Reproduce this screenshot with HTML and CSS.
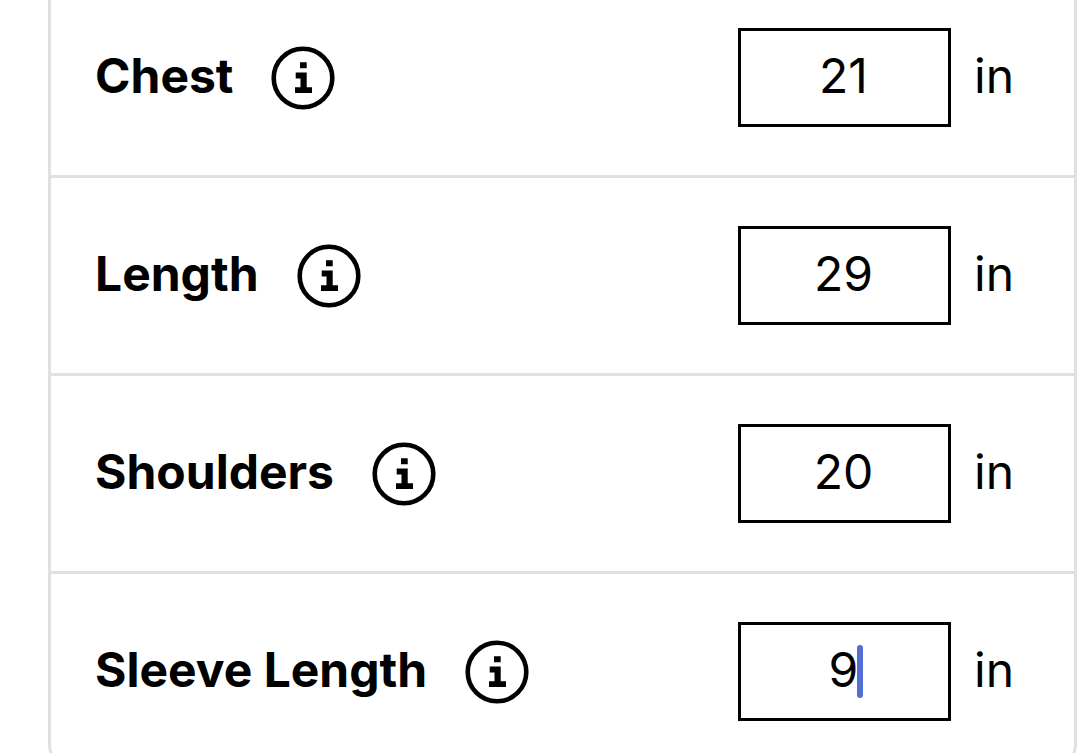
FILE: index.html
```html
<!DOCTYPE html>
<html lang="en">
<head>
  <meta charset="utf-8">
  <meta name="viewport" content="width=device-width, initial-scale=1.0">
  <title>Measurements</title>
  <link rel="stylesheet" href="styles.css">
</head>
<body>

<!-- shared info icon -->
<svg class="sprite" aria-hidden="true">
  <symbol id="info" viewBox="0 0 64 64">
    <circle cx="32" cy="32" r="29.3" fill="none" stroke="#000" stroke-width="4.6"/>
    <path d="M29 16.3h6.7v6H29zM24.7 26.6h11v14.6H41v5.8H24v-5.8h5.5v-8.8h-4.8z"/>
  </symbol>
</svg>

<form class="measurements">
  <div class="row">
    <label class="name" for="chest">Chest</label>
    <button class="info" type="button" aria-label="About chest"><svg><use href="#info"/></svg></button>
    <div class="field">
      <input class="value" id="chest" type="text" inputmode="decimal" value="21">
    </div>
    <span class="unit">in</span>
  </div>

  <div class="row">
    <label class="name" for="length">Length</label>
    <button class="info" type="button" aria-label="About length"><svg><use href="#info"/></svg></button>
    <div class="field">
      <input class="value" id="length" type="text" inputmode="decimal" value="29">
    </div>
    <span class="unit">in</span>
  </div>

  <div class="row">
    <label class="name" for="shoulders">Shoulders</label>
    <button class="info" type="button" aria-label="About shoulders"><svg><use href="#info"/></svg></button>
    <div class="field">
      <input class="value" id="shoulders" type="text" inputmode="decimal" value="20">
    </div>
    <span class="unit">in</span>
  </div>

  <div class="row">
    <label class="name" for="sleeve">Sleeve Length</label>
    <button class="info" type="button" aria-label="About sleeve length"><svg><use href="#info"/></svg></button>
    <div class="field">
      <input class="value" id="sleeve" type="text" inputmode="decimal" value="9">
      <span class="caret"></span>
    </div>
    <span class="unit">in</span>
  </div>
</form>

</body>
</html>
```
FILE: styles.css
```css
* {
  box-sizing: border-box;
}

body {
  margin: 0;
  height: 100vh;
  overflow: hidden;
  background: #fff;
  color: #000;
  font-family: Inter, "Liberation Sans", Arial, sans-serif;
  font-size: 48px;
}

.sprite {
  display: none;
}

.measurements {
  margin-left: 48px;
  border: 3px solid #e0e0e0;
  border-top: none;
  border-radius: 0 0 28px 28px;
}

.row {
  display: flex;
  align-items: center;
  padding: 48px 60px 48px 44px;
  border-bottom: 3px solid #e0e0e0;
}
.row:first-child {
  padding-top: 28px; /* list continues above */
}
.row:last-child {
  border-bottom: none;
}

.name {
  font-weight: bold;
  line-height: 56px;
  padding-bottom: 4px;
  white-space: nowrap;
}

.info {
  width: 64px;
  height: 64px;
  margin-left: 38px;
  padding: 0;
  border: none;
  background: none;
}
.info svg {
  display: block;
  width: 100%;
  height: 100%;
}

.field {
  position: relative;
  width: 213px;
  margin-left: auto;
}

.value {
  display: block;
  width: 100%;
  height: 99px;
  padding: 0 2px 4px 0;
  border: 3px solid #000;
  border-radius: 0;
  background: #fff;
  color: inherit;
  font: inherit;
  text-align: center;
  outline: none;
}

/* text cursor, sits right after the digit */
.caret {
  position: absolute;
  top: 23px;
  left: 56%;
  width: 6px;
  height: 53px;
  border-radius: 3px;
  background: #536dd3;
}

.unit {
  width: 40px;
  margin-left: 23px;
  line-height: 56px;
  padding-bottom: 4px;
}
```
